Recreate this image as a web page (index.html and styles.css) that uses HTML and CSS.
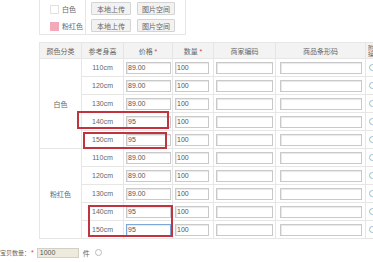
FILE: index.html
```html
<!DOCTYPE html>
<html lang="zh-CN">
<head>
    <meta charset="UTF-8">
    <title>宝贝规格</title>
    <link rel="stylesheet" href="styles.css">
</head>
<body>
<div class="page">
    <table class="colors">
        <tr>
            <td class="color-name"><span class="swatch"></span>白色</td>
            <td class="color-btns"><button>本地上传</button><button>图片空间</button></td>
        </tr>
        <tr>
            <td class="color-name"><span class="swatch pink"></span>粉红色</td>
            <td class="color-btns"><button>本地上传</button><button>图片空间</button></td>
        </tr>
    </table>

    <table class="sku">
        <colgroup>
            <col class="c1"><col class="c2"><col class="c3"><col class="c4"><col class="c5"><col class="c6"><col class="c7">
        </colgroup>
        <thead>
            <tr>
                <th>颜色分类</th>
                <th>参考身高</th>
                <th>价格 <em>*</em></th>
                <th>数量 <em>*</em></th>
                <th>商家编码</th>
                <th>商品条形码</th>
                <th class="op">附<br>操</th>
            </tr>
        </thead>
        <tbody>
            <tr>
                <td rowspan="5" class="group">白色</td>
                <td>110cm</td>
                <td class="p"><input class="price" value="89.00"></td>
                <td class="q"><input class="qty" value="100"></td>
                <td class="m"><input class="code"></td>
                <td class="b"><input class="bar"></td>
                <td class="op"><span class="dot"></span></td>
            </tr>
            <tr>
                <td>120cm</td>
                <td class="p"><input class="price" value="89.00"></td>
                <td class="q"><input class="qty" value="100"></td>
                <td class="m"><input class="code"></td>
                <td class="b"><input class="bar"></td>
                <td class="op"><span class="dot"></span></td>
            </tr>
            <tr>
                <td>130cm</td>
                <td class="p"><input class="price" value="89.00"></td>
                <td class="q"><input class="qty" value="100"></td>
                <td class="m"><input class="code"></td>
                <td class="b"><input class="bar"></td>
                <td class="op"><span class="dot"></span></td>
            </tr>
            <tr>
                <td>140cm</td>
                <td class="p"><input class="price" value="95"></td>
                <td class="q"><input class="qty" value="100"></td>
                <td class="m"><input class="code"></td>
                <td class="b"><input class="bar"></td>
                <td class="op"><span class="dot"></span></td>
            </tr>
            <tr>
                <td>150cm</td>
                <td class="p"><input class="price" value="95"></td>
                <td class="q"><input class="qty" value="100"></td>
                <td class="m"><input class="code"></td>
                <td class="b"><input class="bar"></td>
                <td class="op"><span class="dot"></span></td>
            </tr>
            <tr>
                <td rowspan="5" class="group">粉红色</td>
                <td>110cm</td>
                <td class="p"><input class="price" value="89.00"></td>
                <td class="q"><input class="qty" value="100"></td>
                <td class="m"><input class="code"></td>
                <td class="b"><input class="bar"></td>
                <td class="op"><span class="dot"></span></td>
            </tr>
            <tr>
                <td>120cm</td>
                <td class="p"><input class="price" value="89.00"></td>
                <td class="q"><input class="qty" value="100"></td>
                <td class="m"><input class="code"></td>
                <td class="b"><input class="bar"></td>
                <td class="op"><span class="dot"></span></td>
            </tr>
            <tr>
                <td>130cm</td>
                <td class="p"><input class="price" value="89.00"></td>
                <td class="q"><input class="qty" value="100"></td>
                <td class="m"><input class="code"></td>
                <td class="b"><input class="bar"></td>
                <td class="op"><span class="dot"></span></td>
            </tr>
            <tr>
                <td>140cm</td>
                <td class="p"><input class="price" value="95"></td>
                <td class="q"><input class="qty" value="100"></td>
                <td class="m"><input class="code"></td>
                <td class="b"><input class="bar"></td>
                <td class="op"><span class="dot"></span></td>
            </tr>
            <tr>
                <td>150cm</td>
                <td class="p"><input class="price focus" value="95"></td>
                <td class="q"><input class="qty" value="100"></td>
                <td class="m"><input class="code"></td>
                <td class="b"><input class="bar"></td>
                <td class="op"><span class="dot"></span></td>
            </tr>
        </tbody>
    </table>

    <div class="amount">
        <span class="label">宝贝数量：</span>
        <em>*</em>
        <input class="total" value="1000">
        <span class="unit">件</span>
        <span class="info"></span>
    </div>
    <div class="more">
        <span class="radio"></span>
        <span class="radio"></span>
    </div>

    <!-- highlight boxes drawn over the table -->
    <div class="mark mark1"></div>
    <div class="mark mark2"></div>
    <div class="mark mark3"></div>
</div>
</body>
</html>
```

FILE: styles.css
```css
body {
    margin: 0;
    background: #fff;
    overflow: hidden;
    font-family: "Liberation Sans", "Noto Sans CJK SC", sans-serif;
    font-size: 7px;
    color: #666;
}

.page {
    position: relative;
    width: 420px;
    padding-left: 39px;
}

em {
    font-style: normal;
    color: #e4393c;
}

/* color picker box */
.colors {
    border-collapse: collapse;
    width: 147px;
    border: 1px solid #e6e6e6;
    border-top: none;
}

.colors td {
    height: 17px;
    padding: 0;
}

.color-name {
    width: 46px;
    padding-left: 10px !important;
    box-sizing: border-box;
    border-right: 1px solid #e6e6e6;
}

.swatch {
    display: inline-block;
    width: 7px;
    height: 7px;
    border: 1px solid #e2e2e2;
    background: #fff;
    vertical-align: -2px;
    margin-right: 3px;
}

.swatch.pink {
    background: #f4a9b8;
    border-color: #f4a9b8;
}

.color-btns {
    padding-left: 5px !important;
}

.color-btns button {
    font: inherit;
    color: #666;
    height: 13px;
    width: 40px;
    padding: 0;
    margin-right: 6px;
    background: #f2f2f2;
    border: 1px solid #d4d4d4;
    border-radius: 1px;
    vertical-align: middle;
}

.color-btns button + button {
    width: 38px;
}

/* sku table */
.sku {
    border-collapse: collapse;
    table-layout: fixed;
    width: 360px;
    margin-top: 7px;
}

.c1 { width: 42px; }
.c2 { width: 42px; }
.c3 { width: 49px; }
.c4 { width: 41px; }
.c5 { width: 62px; }
.c6 { width: 90px; }
.c7 { width: 34px; }

.sku th,
.sku td {
    border: 1px solid #e6e6e6;
    padding: 0;
    text-align: center;
    font-weight: normal;
}

.sku th {
    height: 15px;
    background: #f3f3f3;
}

.sku td {
    height: 17px;
}

.sku td.p,
.sku td.q,
.sku td.m,
.sku td.b {
    text-align: left;
}

.sku td.p { padding-left: 2px; }
.sku td.q { padding-left: 2px; }
.sku td.m { padding-left: 2px; }
.sku td.b { padding-left: 4px; }

.sku th.op {
    text-align: left;
    padding-left: 2px;
    font-size: 6px;
    line-height: 6px;
}

.sku td.op {
    text-align: left;
    padding-left: 3px;
}

.sku input {
    box-sizing: border-box;
    height: 12px;
    padding: 0 1px;
    font: inherit;
    color: #555;
    border: 1px solid #c9c9c9;
    box-shadow: inset 1px 1px 1px #e8e8e8;
    vertical-align: middle;
}

.price { width: 45px; }
.qty { width: 34px; }
.code { width: 57px; }
.bar { width: 82px; }

.sku input.focus {
    border-color: #7ea7d8;
}

.dot {
    display: inline-block;
    width: 5px;
    height: 5px;
    border: 1px solid #8fc2cc;
    border-radius: 50%;
    vertical-align: middle;
}

/* total amount */
.amount {
    display: flex;
    align-items: center;
    margin-top: 8px;
    margin-left: -39px;
    height: 11px;
}

.amount .label {
    font-size: 6px;
    white-space: nowrap;
}

.amount em {
    margin-left: 1px;
}

.total {
    box-sizing: border-box;
    width: 42px;
    height: 10px;
    margin-left: 3px;
    padding: 0 2px;
    font: inherit;
    color: #555;
    background: #efebdc;
    border: 1px solid #d2d0c6;
}

.unit {
    margin-left: 4px;
}

.info {
    width: 5px;
    height: 5px;
    margin-left: 5px;
    border: 1px solid #bbb;
    border-radius: 50%;
}

.more {
    display: flex;
    gap: 48px;
    margin-top: 4px;
    padding-left: 1px;
}

.radio {
    flex: none;
    width: 6px;
    height: 6px;
    border: 1px solid #ccc;
    border-radius: 50%;
}

.mark {
    position: absolute;
    border: 2px solid #c0343f;
    box-sizing: border-box;
}

.mark1 { left: 77px; top: 111px; width: 92px; height: 18px; }
.mark2 { left: 83px; top: 132px; width: 84px; height: 17px; }
.mark3 { left: 88px; top: 205px; width: 85px; height: 32px; }
```
